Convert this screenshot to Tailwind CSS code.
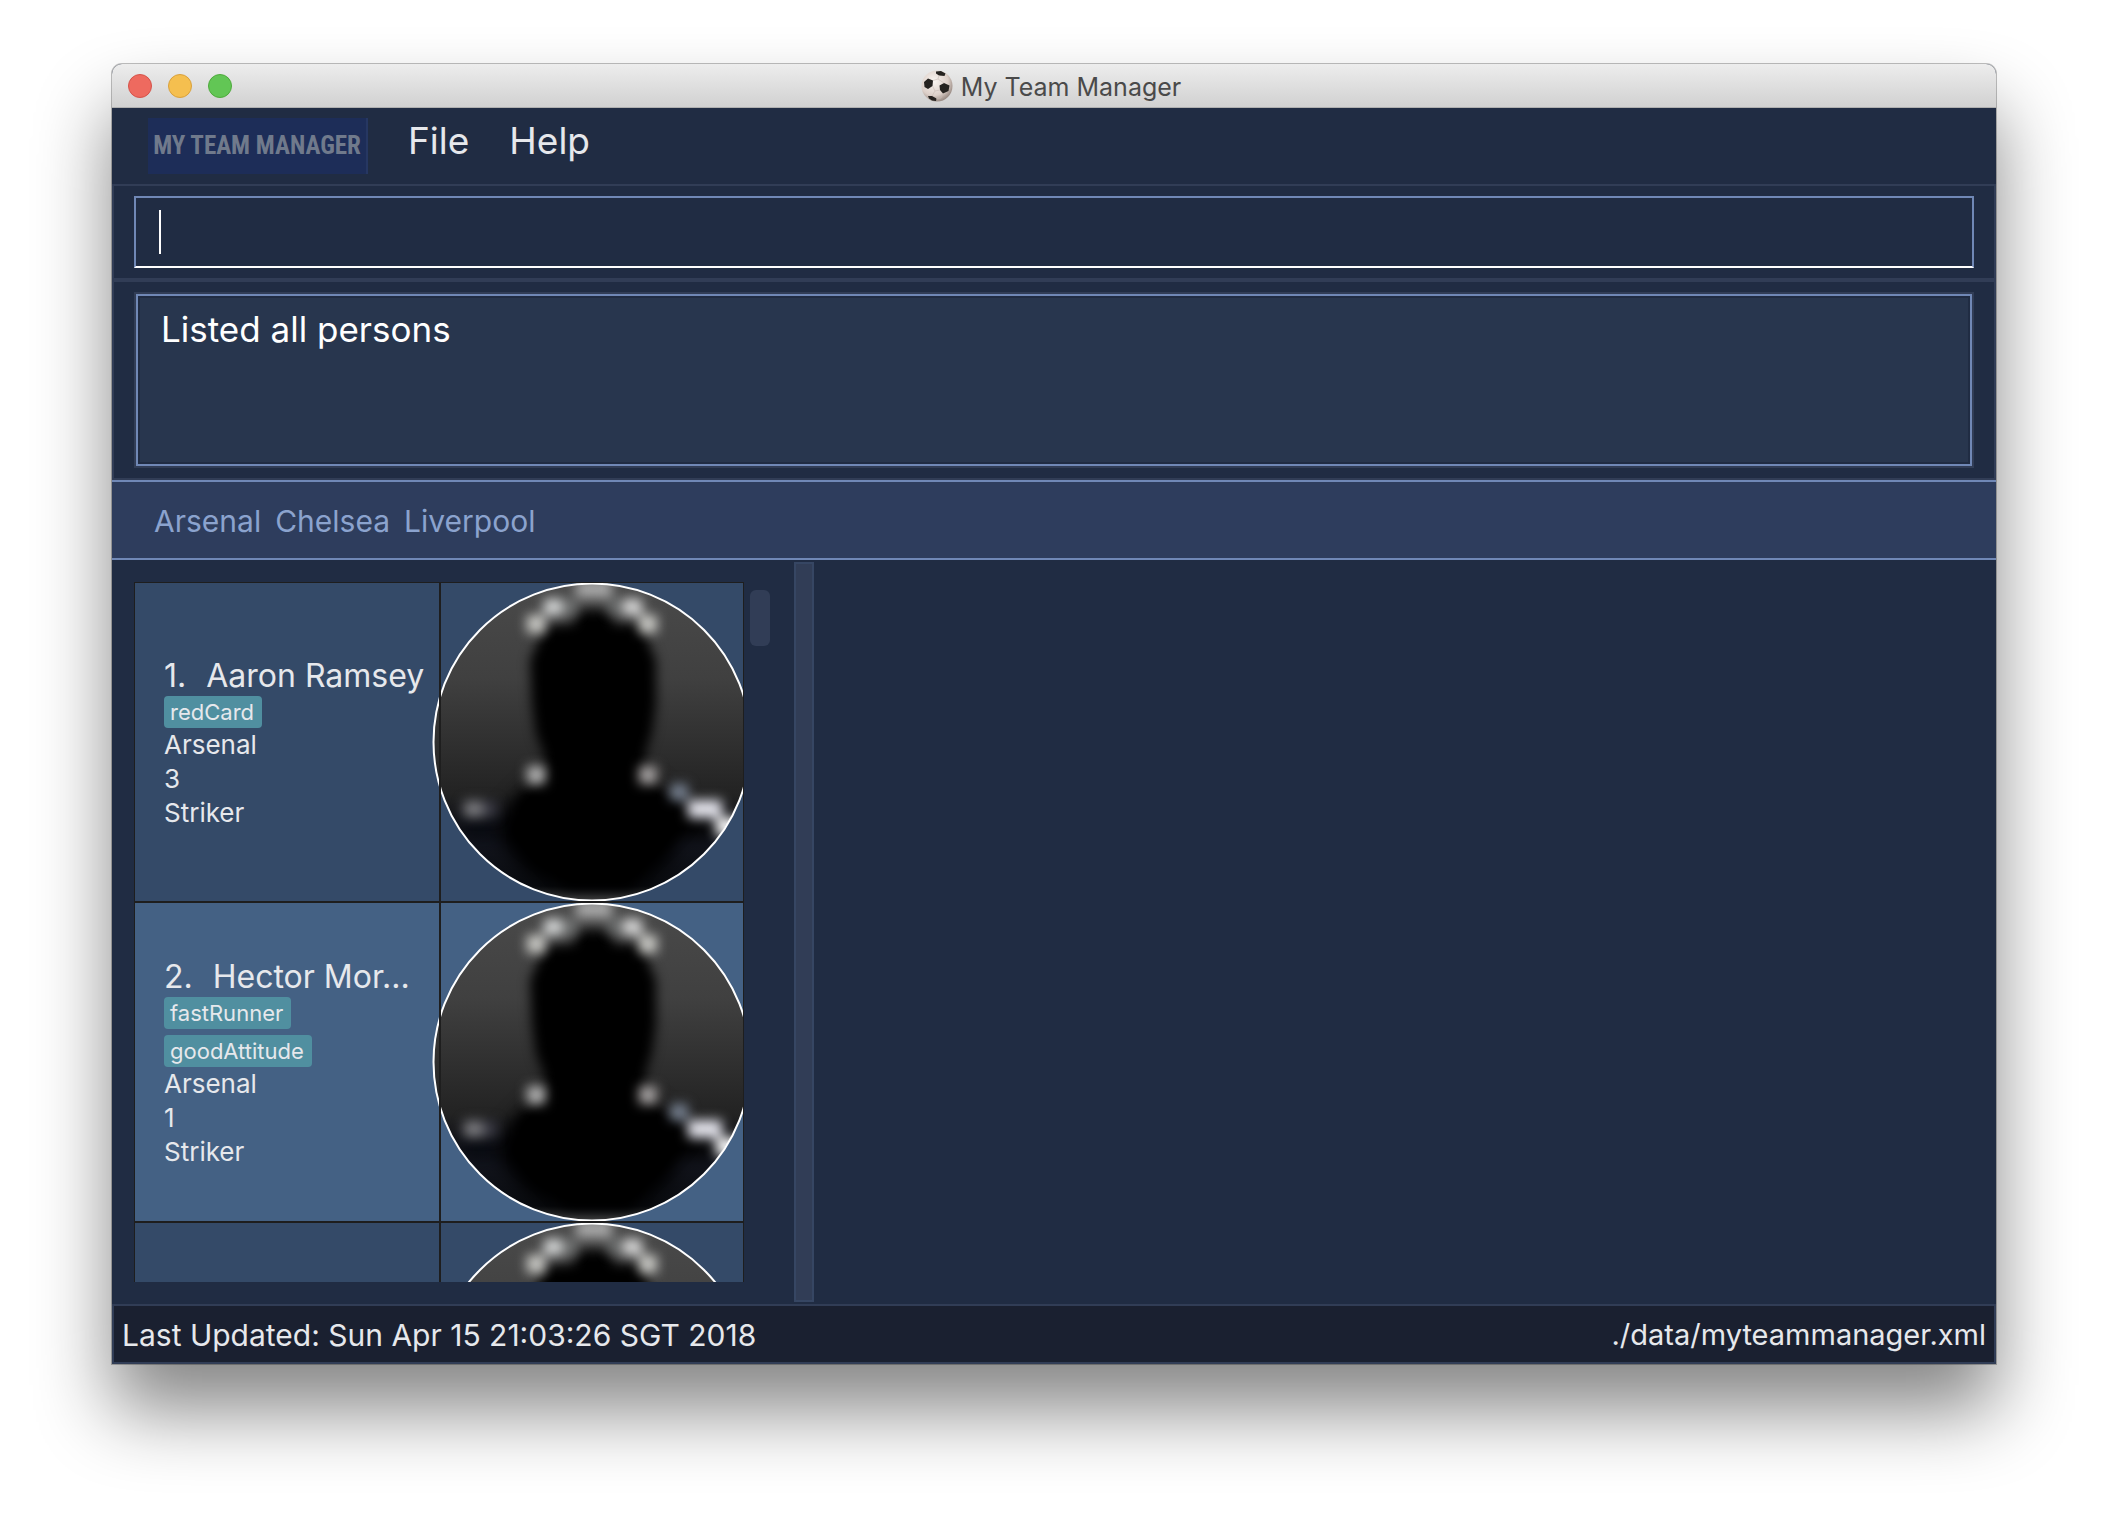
<!DOCTYPE html>
<html lang="en">
<head>
<meta charset="utf-8">
<title>My Team Manager</title>
<script src="https://cdn.jsdelivr.net/npm/@tailwindcss/browser@4"></script>
</head>
<body class="bg-white font-['Inter',sans-serif]">
<svg class="absolute size-0" aria-hidden="true">
  <defs>
    <linearGradient id="backdrop" x1="0" y1="0" x2="0" y2="1">
      <stop offset="0" stop-color="#4a4a4a"/>
      <stop offset=".3" stop-color="#404040"/>
      <stop offset=".66" stop-color="#232323"/>
      <stop offset=".74" stop-color="#14151a"/>
      <stop offset=".82" stop-color="#12141c"/>
      <stop offset=".95" stop-color="#0a0c10"/>
      <stop offset="1" stop-color="#484848"/>
    </linearGradient>
    <filter id="soft" x="-30%" y="-30%" width="160%" height="160%" color-interpolation-filters="sRGB"><feGaussianBlur stdDeviation="6"/></filter>
    <filter id="softer" x="-30%" y="-30%" width="160%" height="160%" color-interpolation-filters="sRGB"><feGaussianBlur stdDeviation="9"/></filter>
    <clipPath id="disc"><circle cx="160" cy="160" r="158"/></clipPath>
    <symbol id="avatar" viewBox="0 0 320 320">
      <g clip-path="url(#disc)">
        <rect width="320" height="320" fill="url(#backdrop)"/>
        <g filter="url(#softer)">
          <path d="M104 196 218 196 250 222 276 238 250 250 236 280 205 304H122L95 290 66 254 74 226Z" fill="#000"/>
          <rect x="248" y="238" width="34" height="16" fill="#000"/>
          <rect x="30" y="240" width="34" height="14" fill="#02050c"/>
        </g>
        <path d="M146 28H176L182 42H210L216 60 224 78V122L220 150 213 172V202L244 224 256 240 236 262 214 282 198 306H136L112 280 88 262 86 218 114 202 112 172 104 152 100 122 98 78 106 60 114 44 142 42Z" fill="#000" filter="url(#soft)"/>
        <g filter="url(#soft)">
          <rect x="144" y="-2" width="36" height="18" fill="#a8a8a8"/>
          <rect x="112" y="17" width="22" height="16" fill="#d8dada"/>
          <rect x="130" y="17" width="15" height="15" fill="#707272"/>
          <rect x="190" y="17" width="20" height="16" fill="#dadada"/>
          <rect x="176" y="17" width="15" height="14" fill="#6a6c6c"/>
          <rect x="95" y="33" width="18" height="18" fill="#ccccc8"/>
          <rect x="207" y="33" width="18" height="18" fill="#ccccc8"/>
          <rect x="95" y="184" width="18" height="18" fill="#b4b4b4"/>
          <rect x="207" y="184" width="18" height="18" fill="#a8a4a4"/>
          <rect x="238" y="202" width="18" height="16" fill="#788292"/>
          <rect x="32" y="219" width="19" height="16" fill="#7c7c80"/>
          <rect x="51" y="219" width="14" height="16" fill="#383842"/>
          <rect x="256" y="218" width="34" height="18" fill="#e4e4ec"/>
          <rect x="284" y="236" width="30" height="18" fill="#fff"/>
        </g>
      </g>
      <circle cx="160" cy="160" r="158.5" fill="none" stroke="#fff" stroke-width="2"/>
    </symbol>
  </defs>
</svg>

<div class="flex h-screen min-h-[900px] px-28 pt-16 pb-40">
  <div class="flex min-w-0 flex-1 flex-col rounded-t-[10px] bg-[#202c43] text-[#e6e8ec] shadow-[0_0_0_1px_rgba(0,0,0,0.25),0_46px_76px_rgba(0,0,0,0.48)]">

    <header class="relative flex h-11 shrink-0 items-center justify-center rounded-t-[10px] border-b border-[#b0b0b0] bg-linear-to-b from-[#ededed] to-[#d1d1d1] pr-1.5">
      <div class="absolute left-4 flex gap-4">
        <button aria-label="Close" class="size-6 rounded-full border border-[#d5534a] bg-[#ee6a5f]"></button>
        <button aria-label="Minimize" class="size-6 rounded-full border border-[#d9a13c] bg-[#f5bf4f]"></button>
        <button aria-label="Zoom" class="size-6 rounded-full border border-[#4eaa3c] bg-[#62c655]"></button>
      </div>
      <svg class="mr-2 size-8" viewBox="0 0 32 32" aria-hidden="true">
        <defs><radialGradient id="ball" cx=".4" cy=".35" r=".7"><stop offset="0" stop-color="#fbf6f2"/><stop offset=".65" stop-color="#dccfc8"/><stop offset="1" stop-color="#8f8079"/></radialGradient></defs>
        <circle cx="16" cy="16" r="15.5" fill="url(#ball)"/>
        <path d="M15 1.500 20 1 24.500 3.500 23.500 6 18 5.500 15 3.500ZM3 12 7 8.500 12 10.500 11.500 16 7 19 3.500 17ZM18.500 15.500 23 13 28.500 15.500 27.500 21 22 23.500 19 20ZM7 26 11 26 15.500 28.500 15 31 11 30.500 8 28.500Z" fill="#25221f"/>
        <path d="M12 10.500 17 9 18 5.500M17 9 23 13M11.500 16 14 21 19 20M14 21 11 26M22 23.500 20 28 15.500 28.500" fill="none" stroke="#c8bbb3" stroke-width=".6"/>
      </svg>
      <h1 class="pt-0.5 text-[25px] leading-8 text-[#4a4a4a]">My Team Manager</h1>
    </header>

    <nav class="flex h-[76px] shrink-0 items-start gap-10 pt-2.5 pl-9 text-[37px] leading-[46px]">
      <div class="flex h-14 w-[220px] items-center justify-center border-r-2 border-[#263762] bg-[#1d2d58] font-['Liberation_Sans_Narrow','Roboto_Condensed','Liberation_Sans',sans-serif] text-[25px] font-bold whitespace-nowrap text-[#707a8c]">MY TEAM MANAGER</div>
      <button>File</button>
      <button>Help</button>
    </nav>

    <div class="flex h-24 shrink-0 border-2 border-[#313d56] px-5 py-2.5">
      <input aria-label="Command" autofocus class="w-full border-2 border-[#7088b6] border-b-white bg-transparent px-[23px] text-[36px] text-white caret-transparent outline-none">
      <span class="absolute mt-3.5 ml-[25px] h-11 w-0.5 bg-white" aria-hidden="true"></span>
    </div>

    <div class="flex h-[198px] shrink-0 border-x-2 border-t-2 border-[#313d56] px-5 pt-2.5 pb-2.5">
      <div class="flex flex-1 border-2 border-[#313d56]">
        <div class="flex flex-1 border-2 border-[#7088b6] p-0.5">
          <output class="flex-1 bg-[#28364e] px-[21px] pt-2.5 text-[35px] leading-[42px] text-white">Listed all persons</output>
        </div>
      </div>
    </div>
    <div class="h-0.5 shrink-0 bg-[#313d56]"></div>

    <div class="flex h-20 shrink-0 items-center gap-3.5 border-y-2 border-[#7088b6] bg-[#2e3d5d] pt-0.5 pl-[42px] text-[30px] leading-9 text-[#8ba3ce]">
      <button>Arsenal</button>
      <button>Chelsea</button>
      <button>Liverpool</button>
    </div>

    <main class="flex min-h-0 flex-1">
      <section class="flex w-[682px] shrink-0 gap-1.5 py-[22px] pl-[22px]">
        <ul class="w-[610px] overflow-hidden">
          <li class="relative flex h-80 overflow-hidden bg-[#344a68]">
            <div class="flex w-[306px] shrink-0 flex-col items-start justify-center border border-[#1e1e1e] pt-px pl-[29px] text-[26px] leading-[34px]">
              <h2 class="flex gap-5 text-[32px] leading-10 whitespace-nowrap"><span>1.</span><span>Aaron Ramsey</span></h2>
              <span class="rounded bg-[#508fa0] pr-2 pl-1.5 text-[22px] leading-8">redCard</span>
              <p>Arsenal</p><p>3</p><p>Striker</p>
            </div>
            <svg class="-ml-2 size-80 shrink-0" role="img" aria-label="Aaron Ramsey"><use href="#avatar"/></svg>
            <span class="absolute inset-y-0 right-0 w-[304px] border border-[#1e1e1e]"></span>
            <span class="absolute inset-y-0 left-[305px] w-px bg-[#1e1e1e]"></span>
          </li>
          <li class="relative flex h-80 overflow-hidden bg-[#446184]">
            <div class="flex w-[306px] shrink-0 flex-col items-start justify-center border border-[#1e1e1e] pt-px pl-[29px] text-[26px] leading-[34px]">
              <h2 class="flex gap-5 text-[32px] leading-10 whitespace-nowrap"><span>2.</span><span>Hector Mor...</span></h2>
              <div class="flex flex-col items-start gap-1.5 text-[22px] leading-8">
                <span class="rounded bg-[#508fa0] pr-2 pl-1.5">fastRunner</span>
                <span class="rounded bg-[#508fa0] pr-2 pl-1.5">goodAttitude</span>
              </div>
              <p>Arsenal</p><p>1</p><p>Striker</p>
            </div>
            <svg class="-ml-2 size-80 shrink-0" role="img" aria-label="Hector"><use href="#avatar"/></svg>
            <span class="absolute inset-y-0 right-0 w-[304px] border border-[#1e1e1e]"></span>
            <span class="absolute inset-y-0 left-[305px] w-px bg-[#1e1e1e]"></span>
          </li>
          <li class="relative flex h-80 overflow-hidden bg-[#344a68]">
            <div class="w-[306px] shrink-0 border border-[#1e1e1e]"></div>
            <svg class="-ml-2 size-80 shrink-0" role="img" aria-label="Player photo"><use href="#avatar"/></svg>
            <span class="absolute inset-y-0 right-0 w-[304px] border border-[#1e1e1e]"></span>
            <span class="absolute inset-y-0 left-[305px] w-px bg-[#1e1e1e]"></span>
          </li>
        </ul>
        <div class="mt-2 h-14 w-5 rounded-md bg-[#313d56]"></div>
      </section>
      <div class="my-0.5 w-5 border-2 border-[#364663] bg-[#313d56]"></div>
      <section class="flex-1"></section>
    </main>

    <footer class="flex h-[60px] shrink-0 items-center justify-between border-2 border-[#313d56] bg-[#1a2030] px-2 pt-0.5 leading-9">
      <span class="text-[30px]">Last Updated: Sun Apr 15 21:03:26 SGT 2018</span>
      <span class="text-[29px]">./data/myteammanager.xml</span>
    </footer>
  </div>
</div>
</body>
</html>
